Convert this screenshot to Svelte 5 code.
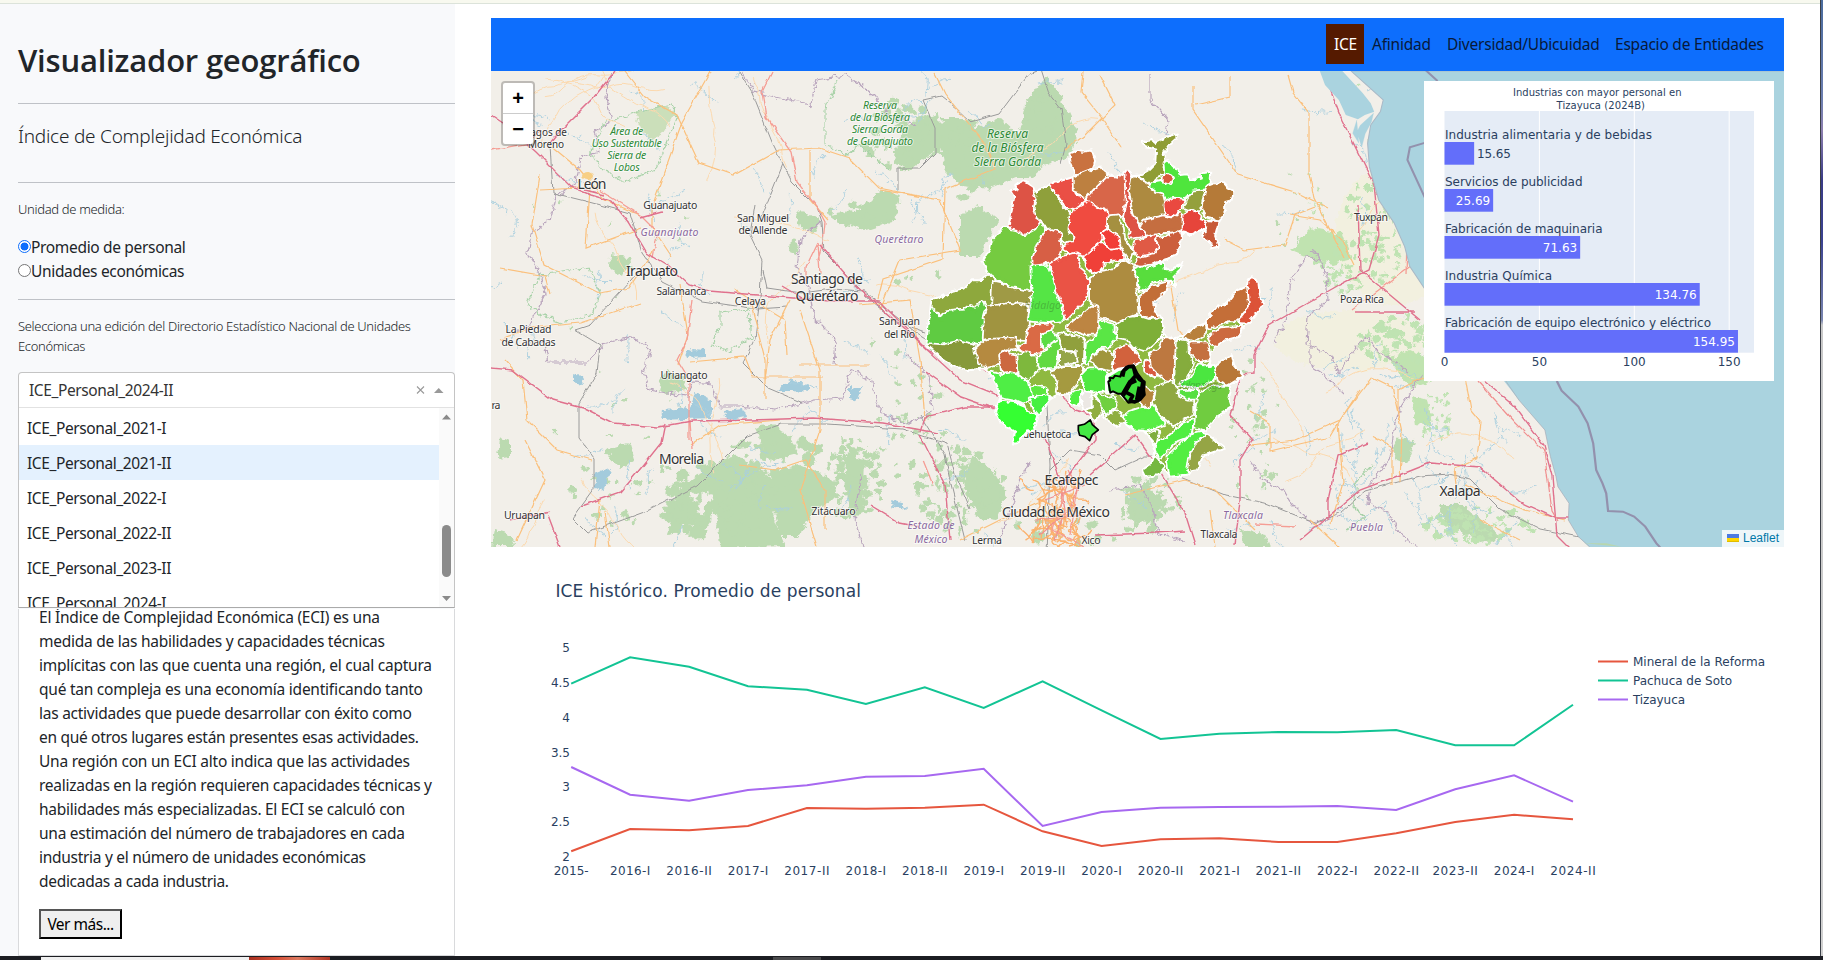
<script>
  const options = ['2021-I', '2021-II', '2022-I', '2022-II', '2023-II', '2024-I'];

  const paragraph = [
    ['El Índice de Complejidad Económica (ECI) es una', 341],
    ['medida de las habilidades y capacidades técnicas', 346],
    ['implícitas con las que cuenta una región, el cual captura', 393],
    ['qué tan compleja es una economía identificando tanto', 384],
    ['las actividades que puede desarrollar con éxito como', 373],
    ['en qué otros lugares están presentes esas actividades.', 380],
    ['Una región con un ECI alto indica que las actividades', 371],
    ['realizadas en la región requieren capacidades técnicas y', 393],
    ['habilidades más especializadas. El ECI se calculó con', 366],
    ['una estimación del número de trabajadores en cada', 366],
    ['industria y el número de unidades económicas', 327],
    ['dedicadas a cada industria.', 190]
  ];

  const bars = [
    ['Industria alimentaria y de bebidas', 15.65, 207],
    ['Servicios de publicidad', 25.69, 137.5],
    ['Fabricación de maquinaria', 71.63, 157.5],
    ['Industria Química', 134.76, 107],
    ['Fabricación de equipo electrónico y eléctrico', 154.95, 266]
  ];

  const periods = ['2015-', '2016-I', '2016-II', '2017-I', '2017-II', '2018-I', '2018-II', '2019-I', '2019-II',
    '2020-I', '2020-II', '2021-I', '2021-II', '2022-I', '2022-II', '2023-II', '2024-I', '2024-II'];
  const periodWidth = (p) => (p.endsWith('-II') ? 45.5 : p.endsWith('-I') ? 40.5 : 35);
  const step = 58.93;
  const series = [
    { name: 'Mineral de la Reforma', w: 132, color: '#e6563e', y: [934, 867, 871, 858, 804, 806, 803, 794, 874, 918, 898, 895, 906, 906, 880, 846, 824, 838] },
    { name: 'Pachuca de Soto', w: 99, color: '#12c494', y: [431, 352, 380, 439, 449, 492, 442, 504, 424, 511, 597, 581, 576, 577, 570, 616, 616, 494] },
    { name: 'Tizayuca', w: 52, color: '#a768f0', y: [681, 764, 782, 750, 736, 710, 708, 686, 858, 816, 803, 801, 800, 798, 810, 748, 706, 785] }
  ];
  const line = (ys) => ys.map((v, i) => `${(571.2 + i * step).toFixed(1)},${(540 + v / 3).toFixed(1)}`).join(' ');

  // Place labels: text, centre x, baseline, width, size, kind
  const places = [
    ['Lagos de', 546, 136, 42, 10, 'town'], ['Moreno', 546, 148, 36, 10, 'town'],
    ['Área de', 626.7, 134.5, 33, 10.5, 'park'], ['Uso Sustentable', 626.7, 146.5, 70, 10.5, 'park'],
    ['Sierra de', 626.7, 158.5, 39, 10.5, 'park'], ['Lobos', 626.7, 170.5, 26, 10.5, 'park'],
    ['Reserva', 880, 108.5, 34, 10.5, 'park'], ['de la Biósfera', 880, 120.5, 60, 10.5, 'park'],
    ['Sierra Gorda', 880, 132.5, 56, 10.5, 'park'], ['de Guanajuato', 880, 144.5, 66, 10.5, 'park'],
    ['Reserva', 1007.5, 137.5, 41, 12, 'park'], ['de la Biósfera', 1007.5, 151.8, 72, 12, 'park'],
    ['Sierra Gorda', 1007.5, 166, 67, 12, 'park'],
    ['León', 592, 189, 29, 14, 'city'], ['Guanajuato', 670.3, 209, 54, 10.5, 'town'],
    ['Guanajuato', 669.5, 236, 58, 10.5, 'state'],
    ['San Miguel', 763, 221.5, 52, 10.5, 'town'], ['de Allende', 763, 234, 49, 10.5, 'town'],
    ['Querétaro', 899, 242.5, 49, 10.5, 'state'],
    ['Irapuato', 652, 276, 52, 14, 'city'], ['Salamanca', 681.5, 295, 50, 10.5, 'town'],
    ['Celaya', 750.3, 304.5, 31, 10.5, 'town'],
    ['Santiago de', 827, 284, 72, 14, 'city'], ['Querétaro', 827, 300.5, 63, 14, 'city'],
    ['La Piedad', 528.5, 333, 46, 10.5, 'town'], ['de Cabadas', 528.5, 345.5, 54, 10.5, 'town'],
    ['San Juan', 899.5, 325, 41, 10.5, 'town'], ['del Río', 899.5, 337.5, 31, 10.5, 'town'],
    ['Uriangato', 684, 379, 47, 10.5, 'town'], ['ra', 496, 408.5, 9, 10.5, 'town'],
    ['Morelia', 681.5, 464, 45, 14, 'city'], ['Uruapan', 524.5, 519, 41, 10.5, 'town'],
    ['Zitácuaro', 833.5, 515, 44, 10.5, 'town'],
    ['Estado de', 931, 529, 47, 10.5, 'state'], ['México', 931, 542.5, 33, 10.5, 'state'],
    ['Huehuetoca', 1043.5, 437.5, 56, 10.5, 'town'],
    ['Ecatepec', 1071.5, 484.5, 54, 14, 'city'], ['Ciudad de México', 1056, 516.5, 108, 14, 'city'],
    ['Lerma', 987, 543.5, 30, 10.5, 'town'], ['Xico', 1091, 544, 19, 10.5, 'town'],
    ['Tlaxcala', 1219, 537.5, 37, 10.5, 'town'], ['Tlaxcala', 1243, 518.5, 40, 10.5, 'state'],
    ['Puebla', 1366.5, 531, 33, 10.5, 'state'], ['Xalapa', 1460, 496, 41, 14, 'city'],
    ['Tuxpan', 1371, 221, 34, 10.5, 'town'], ['Poza Rica', 1362, 302.5, 44, 10.5, 'town']
  ];

  const municipalities = [
    ['#8ea83c', '94,536 125,530 160,512 190,505 215,480 240,480 270,464 283,490 272,565 245,548 238,570 225,572 212,560 200,570 165,572 140,575 125,597 92,570'],
    ['#5fcb42', '94,572 125,600 140,577 200,572 212,562 228,572 247,550 257,590 252,655 225,672 218,662 180,664 130,676 78,672'],
    ['#87993a', '78,676 130,680 180,668 232,682 222,705 232,738 250,742 205,750 165,740 132,722'],
    ['#9f9a45', '283,490 330,500 340,512 365,508 390,506 385,555 330,552 280,555'],
    ['#a09440', '265,565 330,555 378,562 382,620 372,655 330,652 255,655 258,590'],
    ['#74cb40', '247,424 270,385 275,360 290,345 310,320 330,322 370,340 390,325 420,312 430,345 410,385 400,440 385,505 330,492 290,470 262,455'],
    ['#dd5345', '330,212 350,205 345,195 372,182 400,200 395,225 408,240 402,270 415,300 400,322 370,338 355,325 325,318 335,270 342,230'],
    ['#8fa03a', '405,215 440,195 462,215 480,260 505,285 505,310 512,335 530,362 495,360 470,325 450,330 430,300 415,290 408,262 415,235'],
    ['#ea4f44', '455,190 480,182 515,172 520,215 548,240 540,262 500,255 480,225'],
    ['#c9723f', '508,100 530,92 550,95 575,90 585,125 570,150 540,150 525,160 512,130'],
    ['#bd8040', '525,170 545,165 570,155 600,142 608,158 628,165 608,195 575,200 550,228 540,215 525,210'],
    ['#d8664a', '565,235 600,200 625,175 685,168 672,178 680,200 678,235 672,278 620,280 600,262'],
    ['#de5345', '680,158 688,158 684,200 690,255 696,290 712,320 735,342 692,348 696,330 676,290 684,250'],
    ['#ad8a40', '700,175 740,190 790,225 795,270 785,285 745,290 720,303 704,280 694,210'],
    ['#8f9d36', '725,65 755,60 765,68 800,50 815,48 830,40 828,55 805,75 790,100 795,120 782,140 790,155 765,165 755,185 720,165 745,150 765,130 768,85 735,75'],
    ['#50e53e', '755,197 765,190 790,185 800,160 797,130 805,120 815,135 835,150 838,165 860,162 870,180 905,172 898,160 930,155 925,170 932,185 915,200 880,210 845,232 800,235 795,215 770,208'],
    ['#d85a3c', '795,172 803,166 811,174 804,184 795,182'],
    ['#ea4a40', '797,252 820,240 845,242 838,260 820,280 802,290'],
    ['#94a03c', '859,262 868,240 882,218 908,216 902,235 896,266 872,266'],
    ['#b57a38', '915,240 925,205 940,190 968,185 985,205 1000,215 995,240 975,245 975,270 960,300 940,290 920,285 912,262'],
    ['#e6453a', '853,288 875,275 897,288 893,302 912,308 912,320 870,341 850,333'],
    ['#c85a38', '922,315 928,308 952,310 943,345 955,376 932,383 936,370 908,350 925,338'],
    ['#c56e40', '735,305 790,293 820,300 840,285 840,328 790,332 745,340 728,322'],
    ['#e05a45', '708,367 730,363 762,350 774,375 762,396 722,404 704,393'],
    ['#cc5f3c', '772,358 800,353 837,340 841,360 823,402 790,411 770,426 740,438 710,429 722,416 766,406 785,380'],
    ['#f04c40', '515,290 525,272 565,250 590,270 615,275 620,295 600,350 583,385 560,405 545,400 520,395 495,385 505,372 530,370 525,345 512,330'],
    ['#a59040', '628,293 655,290 651,300 664,325 668,360 694,398 688,412 668,380 655,340 628,322'],
    ['#f23c38', '612,343 622,335 651,353 654,381 633,386'],
    ['#f04038', '560,412 585,394 600,372 630,396 661,392 665,412 628,416 608,426 598,444 577,452 565,438'],
    ['#d75f45', '415,378 430,358 438,338 455,334 478,343 472,362 480,377 466,416 440,421 404,431 404,415'],
    ['#ea5245', '456,433 490,414 528,404 532,445 547,457 562,490 550,538 518,570 500,590 484,558 474,528 464,498'],
    ['#55e544', '398,443 437,441 451,470 461,520 480,560 484,596 445,601 390,597 403,520 399,480'],
    ['#ad8c40', '574,482 602,459 642,454 662,434 675,426 696,442 710,480 701,510 708,576 650,600 603,586 594,558 574,538'],
    ['#58dd3e', '708,453 732,444 760,439 788,430 793,453 815,453 846,428 832,455 817,470 822,492 800,471 758,481 722,507 721,480'],
    ['#c26e38', '724,533 757,504 797,493 795,513 759,545 762,570 776,588 728,582'],
    ['#bd8542', '503,622 542,594 575,564 588,565 587,636 555,636'],
    ['#7eaf38', '655,617 682,599 715,594 745,604 782,599 786,638 767,657 735,685 702,676 683,652 658,647'],
    ['#5ae645', '560,725 564,673 592,653 603,626 601,607 636,618 636,635 643,653 623,675 600,676 577,695'],
    ['#da6a45', '388,624 450,616 444,633 422,643 417,670 426,691 388,695 363,683 384,670'],
    ['#b58a40', '230,690 258,664 341,659 345,682 303,687 297,726 262,735 240,723'],
    ['#cc6840', '304,706 320,695 325,709 346,713 344,761 327,761 309,748'],
    ['#7eb83e', '356,709 380,704 402,713 411,743 380,775 359,758'],
    ['#62da40', '417,718 442,694 457,684 472,650 473,680 461,740 424,740'],
    ['#5bdc44', '429,648 453,640 465,655 445,668 433,675'],
    ['#90a03c', '482,644 546,659 544,726 534,730 534,686 494,686'],
    ['#94a548', '484,695 518,704 525,721 484,730'],
    ['#a59a40', '460,756 492,745 545,745 526,788 498,819 474,815 479,780'],
    ['#50ee44', '272,761 300,769 338,764 380,791 390,827 370,845 350,836 304,827 294,795'],
    ['#34ff30', '303,849 345,854 368,864 383,884 410,888 396,927 378,931 350,965 338,966 349,935 304,902 289,870'],
    ['#44f040', '395,838 438,829 445,836 427,860 418,880 404,863'],
    ['#5be83f', '400,804 436,809 436,816 402,823'],
    ['#50e840', '549,768 567,749 585,749 626,768 626,806 562,811'],
    ['#a0963e', '579,718 605,694 636,708 628,744 594,736'],
    ['#d2623e', '644,746 653,689 680,682 698,694 715,720 690,731 662,746'],
    ['#d85a40', '739,726 755,749 770,753 766,766 739,750'],
    ['#bd7840', '755,703 782,689 792,659 817,659 828,720 811,750 811,775 792,771 759,738'],
    ['#85ac3c', '834,664 858,668 858,700 874,730 847,785 829,790'],
    ['#c47040', '873,674 917,674 926,712 900,718 879,698'],
    ['#b8803c', '855,648 877,629 911,615 911,638 880,656'],
    ['#c46e38', '927,592 952,564 981,554 1012,514 1033,502 1036,520 1041,558 1008,596 984,596 928,620'],
    ['#cc6a40', '930,652 962,629 1025,624 1012,646 974,656 945,675 935,663'],
    ['#dc5238', '1050,503 1047,488 1056,471 1071,492 1076,530 1085,550 1066,578 1044,603 1022,602 1054,560'],
    ['#b87838', '949,738 972,724 992,711 998,737 1024,768 985,790 959,778'],
    ['#4ce640', '850,790 873,779 902,735 925,749 937,745 941,768 908,791 872,796'],
    ['#70cc40', '904,823 942,804 985,804 981,830 990,858 947,887 910,925 889,917 894,860'],
    ['#90a842', '774,803 809,790 837,818 875,838 875,877 820,910 783,878 767,850'],
    ['#56e040', '840,818 890,814 886,831 862,831'],
    ['#58ee44', '684,881 721,869 758,864 771,887 788,908 740,926 702,926 675,900'],
    ['#6fd040', '594,824 620,839 637,835 645,855 620,875 599,849'],
    ['#50f040', '514,824 536,815 532,855 514,847'],
    ['#8fae40', '564,834 579,830 596,852 600,878 580,900 574,880 561,869'],
    ['#8fae40', '620,895 649,875 667,904 650,915'],
    ['#b5863e', '729,805 756,823 746,855 729,848'],
    ['#4fee40', '774,968 802,959 852,914 876,905 866,942 828,957 780,1005 770,990'],
    ['#52ee42', '806,1010 852,969 882,944 910,939 876,999 866,1055 814,1065'],
    ['#95a545', '874,1010 893,973 926,950 948,969 968,984 928,996 908,1002 887,1046 868,1051'],
    ['#75b840', '729,1052 758,1033 763,1016 786,1040 772,1060 738,1065'],
    ['#7fae3e', '747,947 770,935 762,965 752,952']
  ];
  const stateOutline =
    '94,536 125,530 160,512 190,505 215,480 240,480 270,464 262,455 247,424 270,385 275,360 290,345 310,320 330,322 325,318 335,270 342,230 330,212 350,205 345,195 372,182 400,200 405,215 440,195 455,190 515,172 528,165 512,130 508,100 530,92 550,95 575,90 585,125 575,150 600,142 628,165 650,170 675,155 690,155 695,168 720,165 745,150 765,130 768,85 735,78 725,65 755,60 765,68 800,50 830,40 828,55 805,75 790,100 797,125 805,120 815,135 835,150 838,165 860,162 870,180 905,172 898,160 930,155 928,195 940,190 968,185 985,205 1000,215 995,240 975,245 975,270 960,300 955,308 945,345 958,378 930,385 935,370 905,350 918,322 870,345 845,335 845,360 825,405 770,432 740,443 790,425 795,450 815,450 850,425 835,455 820,470 825,498 806,482 798,515 762,545 765,570 780,592 788,600 790,640 810,655 850,650 875,625 915,610 925,590 950,560 980,550 1010,510 1040,500 1042,485 1055,465 1075,490 1080,530 1090,550 1070,580 1045,608 1030,620 1015,650 975,660 945,680 930,700 932,716 925,735 945,735 970,720 995,705 1002,735 1030,768 985,795 990,800 985,830 995,860 950,890 910,935 925,945 950,965 975,985 930,1000 910,1005 890,1050 865,1055 870,1062 810,1070 790,1045 775,1065 735,1070 725,1050 755,1030 765,995 760,965 742,945 730,932 700,930 672,905 650,920 615,895 605,880 580,905 570,880 556,870 560,825 545,820 535,860 510,850 508,825 480,820 450,835 420,880 415,885 400,930 380,935 350,970 335,970 345,935 300,905 285,870 300,835 290,795 268,757 250,745 205,750 165,740 132,722 78,672';

  // Repeatable pseudo-random scatter for vegetation patches and streams
  let seed = 41;
  const rnd = () => (seed = (seed * 16807) % 2147483647) / 2147483647;
  const zones = [
    [1395, 210, 50, 45, 100, 4], [1355, 265, 45, 30, 60, 4], [1400, 340, 45, 25, 60, 5], [1300, 215, 25, 60, 18, 3],
    [720, 500, 60, 40, 70, 9], [775, 460, 50, 35, 45, 7], [850, 480, 35, 40, 70, 5], [960, 490, 45, 45, 90, 5],
    [895, 135, 40, 35, 45, 6], [975, 160, 35, 40, 40, 7], [1045, 110, 16, 26, 16, 6], [1150, 500, 30, 30, 50, 5],
    [1435, 415, 18, 28, 40, 3], [1480, 525, 55, 18, 50, 5], [860, 215, 34, 12, 12, 6], [910, 420, 35, 60, 34, 4],
    [620, 480, 55, 50, 24, 4], [1250, 430, 30, 70, 30, 4], [1390, 100, 55, 50, 16, 3], [930, 330, 60, 60, 12, 4],
    [1080, 530, 70, 14, 20, 5], [620, 300, 120, 160, 16, 2]
  ];
  const patches = [];
  for (const [cx, cy, rx, ry, n, size] of zones)
    for (let i = 0; i < n; i++) {
      const a = rnd() * 6.28, r = Math.sqrt(rnd());
      patches.push([cx + Math.cos(a) * r * rx, cy + Math.sin(a) * r * ry, size * (0.2 + rnd() * 0.8), size * (0.25 + rnd() * 0.7)]);
    }
  const wander = (x, y, n, len, drift, turn = 1.1) => {
    let d = `M${x.toFixed(1)} ${y.toFixed(1)}`;
    let a = drift;
    for (let i = 0; i < n; i++) {
      a += (rnd() - 0.5) * turn;
      d += `l${(Math.cos(a) * len).toFixed(1)} ${(Math.sin(a) * len).toFixed(1)}`;
    }
    return d;
  };
  const streams = [];
  for (let i = 0; i < 130; i++) streams.push(wander(500 + rnd() * 940, 75 + rnd() * 460, 6, 5, rnd() * 6.28));
  for (let i = 0; i < 36; i++) streams.push(wander(1330 + rnd() * 190, 390 + rnd() * 140, 7, 5, 0.8 + rnd() * 1.4));
  const lanes = [];
  for (let i = 0; i < 26; i++) lanes.push(wander(500 + rnd() * 950, 80 + rnd() * 450, 14, 7, rnd() * 6.28, 0.7));
  const cityRoads = [];
  for (let i = 0; i < 60; i++) cityRoads.push(wander(1055 + (rnd() - 0.5) * 44, 515 + (rnd() - 0.5) * 55, 6, 3.6, rnd() * 6.28));
</script>

<div class="page">
  <div class="top-strip"></div>
  <div class="body">
    <aside>
      <h1>Visualizador geográfico</h1>
      <hr />
      <p class="lead">Índice de Complejidad Económica</p>
      <hr />
      <p class="small unit">Unidad de medida:</p>
      <div class="radios">
        <label><i class="radio on"></i><span>Promedio de personal</span></label>
        <label><i class="radio"></i><span>Unidades económicas</span></label>
      </div>
      <hr />
      <p class="small edition">Selecciona una edición del Directorio Estadístico Nacional de Unidades<br />Económicas</p>
      <div class="select">
        <div class="value">
          <span>ICE_Personal_2024-II</span>
          <svg width="29" height="12" viewBox="0 0 29 12">
            <path d="M2 2.5l7 7M9 2.5l-7 7" stroke="#999" stroke-width="1.1" />
            <path d="M19 9l4.7-5 4.8 5z" fill="#999" />
          </svg>
        </div>
        <div class="menu">
          <div class="options">
            {#each options as o, i}
              <div class="option" class:focused={i === 1}>ICE_Personal_{o}</div>
            {/each}
          </div>
          <div class="scroll">
            <svg width="15" height="199" viewBox="0 0 15 199">
              <path d="M3 11.5l4.5-5 4.5 5zM3 188l4.5 5 4.5-5z" fill="#8a8a8a" />
              <rect x="3" y="117" width="9" height="52" rx="4.5" fill="#8b8b8b" />
            </svg>
          </div>
        </div>
      </div>
      <div class="card">
        <svg class="prose" width="400" height="288" viewBox="0 0 400 288">
          {#each paragraph as [t, w], i}
            <text x="0" y={14 + i * 24} textLength={w}>{t}</text>
          {/each}
        </svg>
        <button>Ver más...</button>
      </div>
    </aside>

    <main>
      <nav>
        <span class="item active">ICE</span>
        <span class="item" style:width="59px">Afinidad</span>
        <span class="item" style:width="152px">Diversidad/Ubicuidad</span>
        <span class="item" style:width="148px">Espacio de Entidades</span>
      </nav>

      <section class="map">
        <svg width="1293" height="476" viewBox="491 71 1293 476">
          <defs>
            <filter id="rough" x="0" y="0" width="1" height="1">
              <feTurbulence type="fractalNoise" baseFrequency="0.16" numOctaves="3" seed="4" />
              <feDisplacementMap in="SourceGraphic" scale="8" xChannelSelector="R" yChannelSelector="G" />
            </filter>
            <filter id="soft" x="0" y="0" width="1" height="1">
              <feTurbulence type="fractalNoise" baseFrequency="0.1" numOctaves="2" seed="9" />
              <feDisplacementMap in="SourceGraphic" scale="4" xChannelSelector="R" yChannelSelector="G" />
            </filter>
            <filter id="edges" x="-0.02" y="-0.02" width="1.04" height="1.04">
              <feTurbulence type="fractalNoise" baseFrequency="0.2" numOctaves="2" seed="12" />
              <feDisplacementMap in="SourceGraphic" scale="5" xChannelSelector="R" yChannelSelector="G" />
            </filter>
            <clipPath id="state"><polygon points={stateOutline} /></clipPath>
          </defs>
          <rect x="491" y="71" width="1293" height="476" fill="#f2efe9" />

          <g filter="url(#rough)">
            <rect x="480" y="60" width="1310" height="495" fill="none" />
            <ellipse cx="1395" cy="235" rx="60" ry="70" fill="#f2f0df" />
            <ellipse cx="1350" cy="340" rx="75" ry="30" fill="#f2f0df" />
            <g fill="#bbdab0">
              <path d="M1018 135L1025 105 1046 77 1060 95 1078 135 1070 155 1045 165 1030 178 1015 178 990 188 960 185 945 170 940 140 942 118 960 118 975 128 1000 118zM912 122l26-10 4 35-30 22-18-6 4-20zM960 215l18-10 20 15-10 18-8 18-20 0z" />
              <path d="M635 112l30-7 10 8-12 20-12 8-12-15z" fill="#cbdfba" />
              <path d="M795 210l25 8-5 15-15-6zM830 215l30-5 20-20 20 5-5 25-30 10-25-8zM912 122l30 3-2 26-20 10-20-8zM610 255l20 2 2 12-15 6-8-8zM790 240l8 2-1 12-8-3z" />
              <path d="M678 490l30-22 30-10 22 12 20 18-8 25 14 34-66 2-2-28-8-30-18 2-12 40-12 2 4-22zM605 450l25-8 5 18-15 8zM755 428l30 5 15 20-30 8zM845 455l20 5-2 50-14 10zM770 470l30-5 30 12 8 20-24 14-16 26-18 0z" />
              <path d="M500 437l10 4 0 16-12 2zM657 384l10-14 16 8 4 12-22 4zM970 455l20 13 16 28-10 25-16-2-16-32zM1130 490l18-4 14 20-8 18-26-4z" />
              <path d="M1415 440l-3 10-5 14-10-4-4-12 6-10zM1438 505l25 0 42 34-26 3-32-18zM495 530l15 4 4 12-22 0zM1240 530l25 3 5 14-25 0z" />
            </g>
            <g fill="#c0e3b0">
              <path d="M1290 250l22-22 30 5 10 26-20 5-22-6zM1388 358l22-8 18 8 4 22-22 8zM1412 396l16 4 4 26-16-2z" />
            </g>
            {#each patches as [x, y, rx, ry]}
              <ellipse cx={x} cy={y} {rx} {ry} fill={x > 1300 ? '#bfe3b2' : '#bbdab0'} />
            {/each}
            <g fill="#a3cbdc">
              <path d="M662 410l28-2 5-16 16 8 0 18-50 2zM724 411l20-2 2 8-20 4zM684 353l8-4 14 1 0 7-20 1zM596 474l14-6-2 11-6 12-8-4zM777 390l14-10 18 5 0 7-15-2zM850 384l4 6 9-4-5 14-8-2zM572 374l10 2 2 8-12-2zM890 500l12 3 4 7-12-2z" />
            </g>
            <g fill="none" stroke="#a9cfdf" stroke-width="0.9">
              {#each streams as d}<path {d} />{/each}
            </g>
            <g fill="none" stroke="#b9a5bd" stroke-width="1.2">
              <path d="M612 71l-6 26 6 25-18 10 5 20-18 5-5 25-20 15-5 22-20 15-3 20 12 20 5 20-15 30-15 8M543 340l5 22 40 0 15-18 28-8 20 14-8 22 6 18 38 6 5-14 20 2 8 22 20 0 35 4 40-10 28-2 8-28 20 10 10 34 28 10 24-14-5-35-22-20M742 73l12 18 22 6 35 8 5-25 30-5 28 20 15 20 25 10M820 222l-20 18-3 28 12 20 5 30 22 22-2 26" />
              <path d="M1150 74l0 25 18 22-2 14M1320 260l-14-4-15 25-6 40-12 22M1310 340l0 25 15 10 20 20M1422 374l-20 30-8 25-4 30-20 25-2 20 20 8 12 22 18 14 20 4M1250 460l12 18 22 14 8 12 20 20 28-10M1310 250l8 4 8 22 2 25-20 15-2 28 25 12 8 18 12-20 15-18 12 15 30 20" />
              <path d="M860 475l-5 40 8 32M1000 540l20-60 10-20M1110 490l30-5 12 22 5 25 30 10" />
            </g>
            <g fill="none" stroke="#a8d2a8" stroke-width="1.1">
              <path d="M606 122l38-12 28-6 5 14-12 30-10 22-30 12-22-12-12-16 8-20zM540 275l50-7 10 25-8 22-30 8-20-8-15-10zM720 312l28-3 4 28-22 14-18-6 8-18zM837 80l-12 30 0 35 22 10 12-10 30 25" />
              <path d="M1372 465l-15 16-3 26 10 10-18 14" />
            </g>
          </g>

          <g filter="url(#soft)">
            <rect x="480" y="60" width="1310" height="495" fill="none" />
            <g fill="none" stroke="#fcd9ae" stroke-width="1">
              {#each lanes as d}<path {d} />{/each}
            </g>
            <g fill="none" stroke="#9a9a9a" stroke-width="1">
              <path d="M740 72l12 20 20 50 20 40 25 25 5 15 2 30 20 20 28 30 25 20 28 10M783 164l-22 55M755 205l-5 30 12 25-2 38-5 40-12 25 25 25 35 15M763 270l4 18 35 5 30-4 32 2 50 40 40 25M550 145l3 48 32 8 45 12 12 40 20 28 40 20 55 8 30-2M640 270l-50 55-15 5 25 15-3 28-18 30 0 35 15 20 0 30-22 30 15 15 60-22 50-25 30-30 20-20 35-12 45 0 75 5 45 15 8 30 15 35" />
              <path d="M898 190l0-22 22 0 15-15 0-25-12-28 18-4 15 12 15 14 28-8 30-40 12-5 8 25 12 15 5 35-5 20" />
              <path d="M1047 555l3-90-3-60M920 415l25 40 5 25 15 60M1050 470l20-20 30 5 15 15 30-14 22 0M1175 475l50 20 40 8 50 20 25-10 25-22 55-15 30-2 20 5 30 30 40 20 40 8 25-10 15 3 12 25" />
            </g>
            <g fill="none" stroke="#fbc07c" stroke-width="1.2">
              <path d="M625 72l20 25 32 18 22 48 35 12 45-25 40-2 30 10 30 30 50 10M710 72l-28 50-30 85 0 20 20 30M550 145l30 25 25 30 35 15M590 188l-4 60 55-20M540 175l-8 50 12 40 55 28 30-5 25-38M500 268l45 8 5 18M500 340l30-12 50-5 60-20M540 190l40-2M680 285l8 50-10 30M690 362l55-5 8 20 70 0M750 300l15 60 0 40M790 300l-20 40-5 40M800 310l20 60 0 60-20 60 18 60M735 290l50 30 2 35M860 305l50-5 10 60 5 60M800 365l70 0M810 150l0 50 18 20M880 190l60 10 20 50-60 10-20 50M525 440l20 40-28 60M600 500l-5 47M605 512l5 35M740 465l35 5 30-10 20 30 0 40M505 360l18 20 4 40 30 30 35 10M690 445l30-20 60-5" />
              <path d="M935 74l10 20 40 50 10 25-50 20-2 70-60 20-5 20M1083 72l-2 20 20 25 20 30M1100 75l15 30-30 30-20 15M1193 85l0 25 45 65 60 18 30 15M1195 105l35-8 0-20M1225 240l20 10 40-5 10-30 20-8M1288 75l5 18 16 20 0 60 5 25 30 60M1170 280l8 50 15 20M1290 215l30 5 22 20 12 25" />
              <path d="M1250 411l20 12 0 28 25-6 35-8 12-20 30-40 20 10 10 45-2 50M1338 423l5 60-12 40M1372 436l20 10 0 40M1398 420l0-30 30-15 35-10 8 45 10 12-4 36-22 10 2 18M1465 485l35 15 25 10 40 10M1360 390l-20 30-45 20-45 5M1125 495l60-15 30 10 40 40M960 540l40-20 45-20M1310 520l30 28M1480 520l40 20M1210 510l5 37" />
            </g>
            <g fill="none" stroke="#fbb26e" stroke-width="1.4">
              {#each cityRoads as d}<path {d} />{/each}
            </g>
            <ellipse cx="588" cy="176" rx="6" ry="4" fill="#f7cf85" />
            <g fill="none" stroke="#f59d94" stroke-width="1.3">
              <path d="M772 72l-10 20 4 25 25 35 6 30 20 25 8 15-2 20-5 18M600 190l40 25 15 15M658 230l-5 28M818 242l-12 25 0 14M818 242l2 32M692 300l-5 40-10 20 12 20 0 40 0 20M690 420l2 30M491 150l35-6 15-14M1072 470l-20 60 40 20M1068 470l10 20-8 45M923 460l10 25M1255 524l40 2 M1408 205l-2 70M1352 310l60-45" />
            </g>
            <g fill="none" stroke="#e0718d" stroke-width="1.4">
              <path d="M615 71l-20 25-35 35-10 12M491 115l15 10 30 27 35 35 20 8 20 6 18 22 18 30 20 12 22 20 20 6 120 10 50 0 50 50 40 15 40 10 12 5 40 8M640 218l22-6M820 245l35 40 45 40 60 55 60 24M802 298l-20-12M491 368l22 2 40 30 30 8 30 15 45 4 35-6 60-1 60-2 70 5 55 10M665 423l-4 20-20 25-20 24-40 14M550 512l-40 8M548 515l12 32M870 505l30 18 20 4M920 432l5-15 40-10 45 0M920 435l25 50 5 55M585 190l20 5" />
              <path d="M926 372l35 25 40 14M1045 438l15 40M1055 390l20 20 20 5M1065 480l30-40 0-40M1090 475l45-40 20 28 30 50 10 32M1095 535l60-2 30-2M1226 375l28-2 0-18 15-30 70-40 30-15 10-35-5-50-32-65-30-80M1240 380l-10 35 22 25-12 20 0 40-5 45M1300 540l60-50 40-15 30-12 50 4 40 35 35 16 40 0M1328 520l0-20 10-45 30-12M1358 205l2 65 60 50M1484 381l30 25 30 40 8 30 5 60 20 20M1355 312l60 0" />
            </g>
            <g fill="none" stroke="#f08f8f" stroke-width="1.2">
              <path d="M1060 480l5 30-10 30M1045 500l40-15M1035 520l50-5M1040 535l30-25 10-25M1478 381l36 40 30 30 8 60 6 10" />
            </g>
          </g>

          <g transform="translate(1280 0) scale(.3463 .3333)">
            <path d="M205 213L298 300 290 335 262 375 253 430 258 500 285 600 330 670 360 740 375 800 420 870 600 1100 665 1143 700 1200H1460V213z" fill="#aad3df" stroke="#a9b8c6" stroke-width="3" />
            <path d="M115 213L130 255 170 300 190 345 225 358 245 345 272 335 262 310 238 278 180 213z" fill="#aad3df" />
            <path d="M270 340l-38 36-10 20 14 45 10-40 18-35zM222 360l-12 40 18 30" fill="#aad3df" stroke="#aad3df" />
            <path d="M420 210L455 243M420 428L375 442 368 480 418 592M798 1140L815 1175 845 1203" fill="none" stroke="#9391ad" stroke-width="6" />
          </g>
          <g transform="translate(1240 370) scale(.3718 .3333)">
            <path d="M708 30L750 90 820 180 835 260 850 320 855 350 885 400 883 450 910 500 940 532H1470V30z" fill="#aad3df" />
            <path d="M715 33L750 90 820 180 835 260 850 320 855 350 885 400 883 450 910 500 940 530" fill="none" stroke="#a7adb8" stroke-width="2" />
            <path d="M925 520l60 0 40 10z" fill="#b8d6ae" />
            <path d="M852 33L865 62 910 110 935 160 950 220 958 300 975 340 985 370 990 423 1030 425 1060 440 1090 470 1120 520 1130 532" fill="none" stroke="#9391ad" stroke-width="6" />
          </g>

          <text class="halo town" x="1015.5" y="437.5" textLength="56" font-size="10.5">Huehuetoca</text>

          <g filter="url(#edges)">
            <g transform="translate(900.2 120.2) scale(.3333)" stroke-linejoin="round">
              <g clip-path="url(#state)">
                <polygon points={stateOutline} fill="#8fb941" />
                {#each municipalities as [fill, points]}
                  <polygon {points} fill="#fff" stroke="#fff" stroke-width="20" />
                  <polygon {points} {fill} stroke={fill} stroke-width="9" />
                {/each}
              </g>
              <polygon points={stateOutline} fill="none" stroke="#fff" stroke-width="6" />
              <path d="M540 830l15-18 18 5 2 45-25 8z" fill="#ece8e4" stroke="#fff" stroke-width="6" />
            </g>
          </g>
          <g transform="translate(900 120) scale(.3333)" stroke-linejoin="round">
            <path d="M620 770l35-22 28-4-10 30 20 10-15 55-20-22-38 2z" fill="#45e83f" stroke="#fff" stroke-width="10" />
            <path d="M625 785l6-4-2-8 10 2 6-8 16 3 4-14 14-16 22-4 12 25 14 18-4 25 0 20-8 20-30 4-22-27-10 0-14-7-8 4z" fill="#3fe03c" stroke="#000" stroke-width="6" />
            <path d="M668 770l4-18 14-12 14 0 6 24 12 14 14 8-2 24 2 14-12 14-16 8-14-4 8-14-22-12 14-30 16-18" fill="none" stroke="#000" stroke-width="11" />
            <path d="M668 826l22-38 18-8M712 840l8-40" fill="none" stroke="#000" stroke-width="15" />
            <path d="M535 917l18-4 18-13 6 14 18 16-18 14-8 18-14-12-16-4-4-14z" fill="#45e845" stroke="#000" stroke-width="5" />
          </g>

          <g>
            <text class="hid" x="1024" y="309" textLength="37">Hidalgo</text>
            <text class="hid" x="1178" y="389" textLength="45">Tulancingo</text>
            {#each places as [t, x, y, w, size, kind]}
              {#if t !== 'Huehuetoca'}
                <text class="halo {kind}" x={x - w / 2} {y} textLength={w} font-size={size}>{t}</text>
              {/if}
            {/each}
          </g>
        </svg>

        <div class="zoom"><span>+</span><span>−</span></div>
        <div class="industry">
          <svg width="350" height="300" viewBox="1424 81 350 300">
            <rect x="1444.5" y="111" width="309.5" height="241.7" fill="#e5ecf6" />
            {#each [50, 100, 150] as v}<path d="M{1444.5 + v * 1.898} 111V352.7" stroke="#fff" />{/each}
            <g fill="#2a3f5f">
              <text x="1513" y="96" font-size="10" textLength="168.5">Industrias con mayor personal en</text>
              <text x="1556.5" y="109" font-size="10" textLength="88.5">Tizayuca (2024B)</text>
              {#each bars as [t, v, w], i}
                <text x="1445" y={139 + i * 47} textLength={w}>{t}</text>
                <rect x="1444.5" y={142 + i * 47} width={v * 1.894} height="22.7" fill="#636efa" />
                {#if i === 0}
                  <text x="1477" y="158" textLength="34">{v}</text>
                {:else}
                  <text x={1441.5 + v * 1.894} y={158 + i * 47} text-anchor="end" fill="#fff">{v}</text>
                {/if}
              {/each}
              {#each [0, 50, 100, 150] as v}
                <text x={1444.5 + v * 1.898} y="366" text-anchor="middle">{v}</text>
              {/each}
            </g>
          </svg>
        </div>
        <div class="attribution">
          <svg width="12" height="8" viewBox="0 0 12 8"><path d="M0 0h12v4H0z" fill="#4c7be1" /><path d="M0 4h12v3H0z" fill="#ffd500" /><path d="M0 7h12v1H0z" fill="#e0bc00" /></svg>
          <span>Leaflet</span>
        </div>
      </section>

      <section class="history">
        <svg width="1293" height="400" viewBox="491 547 1293 400" fill="#2a3f5f">
          <text x="555.5" y="597" font-size="17" textLength="305.5">ICE histórico. Promedio de personal</text>
          {#each [5, 4.5, 4, 3.5, 3, 2.5, 2] as v, i}
            <text x="570" y={652 + i * 34.85} text-anchor="end">{v}</text>
          {/each}
          {#each periods as p, i}
            <text x={571.2 + i * step - periodWidth(p) / 2} y="875" textLength={periodWidth(p)}>{p}</text>
          {/each}
          {#each series as s, i}
            <polyline points={line(s.y)} fill="none" stroke={s.color} stroke-width="2" />
            <path d="M1598 {661.5 + i * 19}h30" stroke={s.color} stroke-width="2" />
            <text x="1633" y={666 + i * 19} textLength={s.w}>{s.name}</text>
          {/each}
        </svg>
      </section>
    </main>
    <div class="edge"></div>
  </div>
  <div class="taskbar"><i class="light"></i><i class="red"></i><i class="gap"></i><i class="grey"></i></div>
</div>

<style>
  :global(body) { background: #fff; overflow: hidden; }
  .page { width: 1823px; height: 960px; display: flex; flex-direction: column; font-family: 'Noto Sans', 'Open Sans', sans-serif; color: #212529; }
  .top-strip { height: 3px; background: #f8f9ef; border-bottom: 1px solid #dce3da; margin-right: 3px; }
  .body { flex: 1; display: flex; min-height: 0; }
  aside { width: 455px; box-sizing: border-box; padding-left: 18px; background: #f8f9fb; display: flex; flex-direction: column; }
  hr { width: 100%; margin: 0; border: 0; border-top: 1px solid #bfc2c7; }
  h1 { margin: 37px 0 23px; font: 600 31px/39px 'Open Sans', sans-serif; letter-spacing: -0.2px; white-space: nowrap; }
  .lead { margin: 17px 0 30px; font-size: 19px; line-height: 31px; font-weight: 300; letter-spacing: -0.23px; white-space: nowrap; }
  .small { margin: 0; font-size: 13px; line-height: 20px; font-weight: 300; letter-spacing: -0.33px; white-space: nowrap; }
  .unit { padding: 16px 0 16px; }
  .edition { padding: 16px 0 16px; }
  .radios { height: 64px; font-size: 15.5px; }
  label { display: flex; align-items: center; height: 24px; letter-spacing: -0.33px; white-space: nowrap; }
  .radio { box-sizing: border-box; width: 13px; height: 13px; border: 1px solid #767676; border-radius: 50%; background: #fff; position: relative; top: -1px; }
  .radio.on { border-color: #0d6efd; background: radial-gradient(circle, #0d6efd 3.6px, #fff 4.3px); }
  .select { flex: none; height: 236px; box-sizing: border-box; border: 1px solid #c4c4c4; border-bottom-color: #aaa; border-radius: 4px 4px 0 0; background: #fff; margin-bottom: 1px; font-size: 15.5px; letter-spacing: -0.4px; overflow: hidden; }
  .value { height: 34px; border-bottom: 1px solid #e2e2e2; display: flex; align-items: center; justify-content: space-between; padding: 0 10px 0 10px; color: #333; }
  .menu { display: flex; height: 199px; overflow: hidden; }
  .options { flex: 1; padding-top: 2px; }
  .option { height: 35px; line-height: 37px; padding-left: 8px; }
  .focused { background: #e4f1fe; }
  .scroll { width: 15px; background: #fafafa; }
  .card { flex: 1; border: 1px solid #d9dadc; border-top: 0; background: #fff; padding-left: 20px; }
  .prose { display: block; fill: #212529; font-size: 15.5px; }
  button { box-sizing: border-box; display: block; width: 83px; height: 30px; margin: 12px 0 0; padding: 0; border: 2px solid #000; border-top-color: #555; border-left-color: #555; background: #efefef; font: 15.5px 'Noto Sans', sans-serif; letter-spacing: -0.5px; color: #000; }
  main { flex: 1; padding: 14px 0 0 36px; display: flex; flex-direction: column; }
  nav { width: 1293px; height: 53px; background: #0d6efd; display: flex; align-items: flex-start; justify-content: flex-end; padding: 6px 13px 0 0; box-sizing: border-box; }
  .item { height: 40px; line-height: 41px; padding: 0 8px; font-size: 15.5px; color: #08193a; letter-spacing: -0.22px; white-space: nowrap; }
  .active { background: #551a00; color: #fff; width: 22px; }
  .map { position: relative; width: 1293px; height: 476px; overflow: hidden; }
  .map > svg { display: block; }
  .halo { font-family: 'Noto Sans', sans-serif; paint-order: stroke; stroke: rgba(255, 255, 255, 0.6); stroke-width: 2px; stroke-linejoin: round; }
  .town, .city { fill: #333; }
  .park { fill: #2d8a36; font-style: italic; }
  .state { fill: #8b6aa0; font-style: italic; }
  .hid { font-family: 'Noto Sans', sans-serif; fill: rgba(50, 90, 40, 0.35); font-size: 10.5px; font-style: italic; }
  .zoom { position: absolute; left: 10px; top: 10px; width: 30px; border: 2px solid rgba(0, 0, 0, 0.22); border-radius: 4px; background: #fff; background-clip: padding-box; }
  .zoom span { display: block; height: 30px; text-align: center; font: bold 20px/31px 'Liberation Sans', sans-serif; color: #000; }
  .zoom span:first-child { border-bottom: 1px solid #ccc; }
  .industry { position: absolute; left: 933px; top: 10px; width: 350px; height: 300px; background: #fff; }
  .industry svg, .history svg { display: block; font: 12px 'DejaVu Sans', sans-serif; }
  .attribution { position: absolute; right: 0; bottom: 0; height: 17px; width: 62px; box-sizing: border-box; padding: 0 0 2px 5px; background: rgba(255, 255, 255, 0.8); display: flex; align-items: center; gap: 4px; font: 12px 'Liberation Sans', sans-serif; color: #0078a8; }
  .edge { width: 3px; background: linear-gradient(90deg, #3c4048 1px, transparent 1px), linear-gradient(#4a6b9d 0, #6d7fb0 100px, #8d7fae 130px, #3a3c86 180px, #3b4290 240px, #7a86b0 320px, #c8c8c8 325px, #d0d0d0 100%); margin-top: -4px; }
  .taskbar { height: 4px; background: #1c1d22; display: flex; align-items: flex-end; padding-left: 41px; }
  .taskbar i { height: 3px; display: block; }
  .light { width: 208px; background: #f0f0f0; }
  .red { width: 81px; background: linear-gradient(90deg, #a83020, #d65038 35%, #dd7a60 60%, #b03525); }
  .gap { width: 443px; }
  .grey { width: 48px; background: #4a4a4c; }
</style>
